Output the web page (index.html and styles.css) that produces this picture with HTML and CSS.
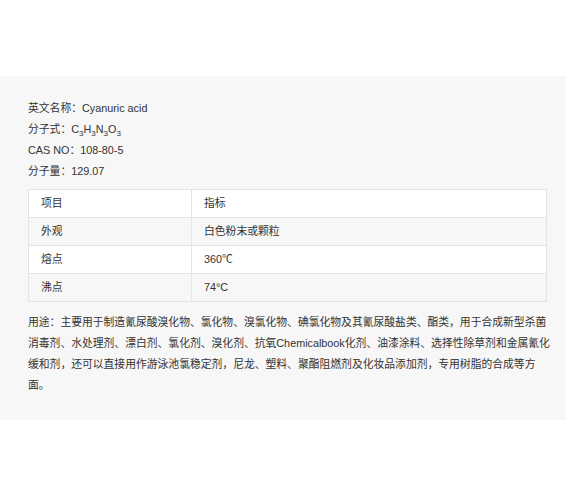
FILE: index.html
```html
<!DOCTYPE html>
<html lang="zh-CN">
<head>
<meta charset="utf-8">
<link rel="stylesheet" href="styles.css">
</head>
<body>
<div class="page">
  <section class="panel">
    <div class="info">
      <p>英文名称：Cyanuric acid</p>
      <p>分子式：C<sub>3</sub>H<sub>3</sub>N<sub>3</sub>O<sub>3</sub></p>
      <p>CAS NO：108-80-5</p>
      <p>分子量：129.07</p>
    </div>
    <table class="spec">
      <tr><td class="c1">项目</td><td>指标</td></tr>
      <tr><td class="c1">外观</td><td>白色粉末或颗粒</td></tr>
      <tr><td class="c1">熔点</td><td>360℃</td></tr>
      <tr><td class="c1">沸点</td><td>74°C</td></tr>
    </table>
    <p class="usage">用途：主要用于制造氰尿酸溴化物、氯化物、溴氯化物、碘氯化物及其氰尿酸盐类、酯类，用于合成新型杀菌消毒剂、水处理剂、漂白剂、氯化剂、溴化剂、抗氧Chemicalbook化剂、油漆涂料、选择性除草剂和金属氰化缓和剂，还可以直接用作游泳池氯稳定剂，尼龙、塑料、聚酯阻燃剂及化妆品添加剂，专用树脂的合成等方面。</p>
  </section>
</div>
</body>
</html>
```

FILE: styles.css
```css
html, body {
  margin: 0;
  padding: 0;
  background: #fff;
}
body {
  font-family: "Liberation Sans", Arial, "Noto Sans CJK SC", sans-serif;
  font-size: 10.8px;
  color: #333;
}
.page {
  padding-top: 76px;
}
.panel {
  width: 566px;
  box-sizing: border-box;
  background: #f7f7f7;
  padding: 22px 15px 24px 28px;
}
.info p {
  margin: 0;
  line-height: 21px;
}
.info sub {
  font-size: 8px;
  vertical-align: -3px;
  line-height: 0;
}
.spec {
  margin-top: 7px;
  width: 519px;
  border-collapse: collapse;
  border: 1px solid #e4e4e4;
}
.spec td {
  border: 1px solid #e4e4e4;
  height: 27px;
  padding: 0 12px;
  line-height: 27px;
  background: #fff;
}
.spec tr:nth-child(even) td {
  background: #f7f7f7;
}
.spec td.c1 {
  width: 138px;
}
.usage {
  margin: 10px 0 0;
  line-height: 21px;
  width: 523px;
}
```
